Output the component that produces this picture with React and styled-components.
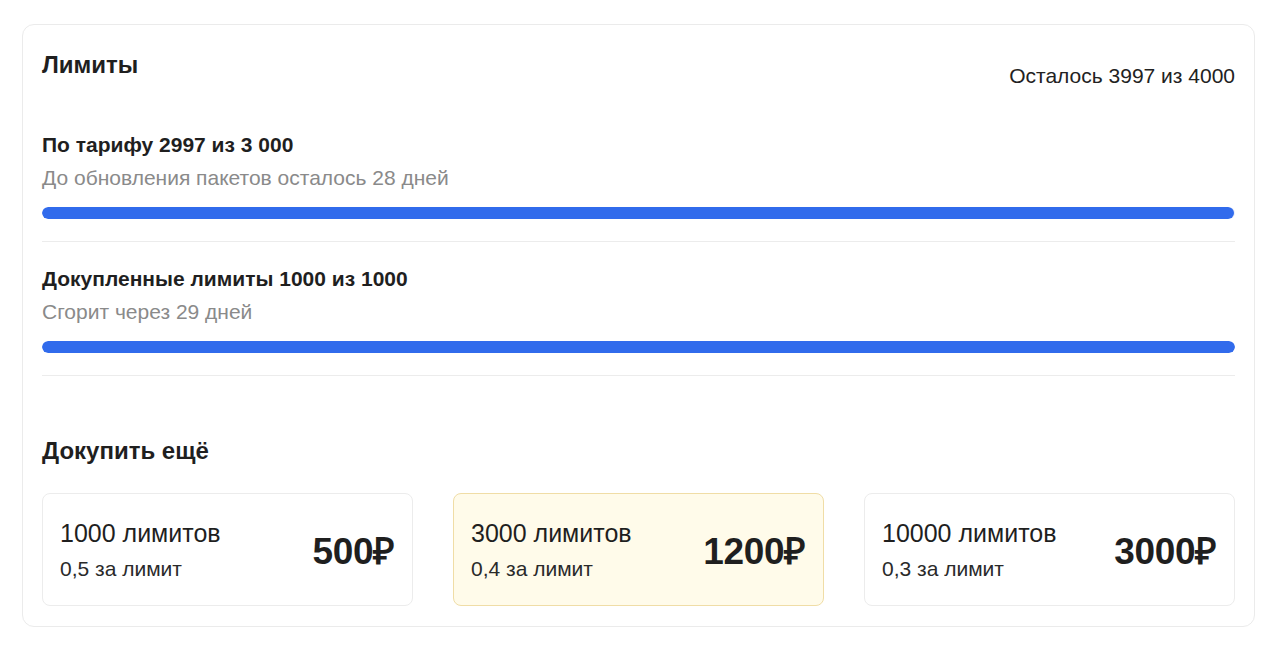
import React from "react";
import styled, { createGlobalStyle } from "styled-components";

const GlobalStyle = createGlobalStyle`
  body {
    margin: 0;
    background: #fff;
    font-family: "Liberation Sans", Arial, sans-serif;
    color: #1f1f1f;
  }
`;

const Page = styled.div`
  padding: 24px 25px 36px 22px;
`;

const Card = styled.section`
  border: 1px solid #ebebeb;
  border-radius: 12px;
  padding: 26px 19px 20px;
`;

const Header = styled.div`
  display: flex;
  justify-content: space-between;
  align-items: flex-start;
  margin-bottom: 18px;
`;

const Title = styled.h2`
  margin: 0;
  font-size: 24px;
  line-height: 28px;
  font-weight: 700;
`;

const Remaining = styled.div`
  margin-top: 12px;
  font-size: 21px;
  line-height: 26px;
  color: #222;
`;

const Limit = styled.div`
  padding: 25px 0 22px;
  border-bottom: 1px solid #ececec;

  & + & {
    padding-top: 24px;
  }
`;

const LimitTitle = styled.div`
  font-size: 21px;
  line-height: 26px;
  font-weight: 700;
`;

const LimitNote = styled.div`
  margin-top: 7px;
  font-size: 21px;
  line-height: 26px;
  color: #8a8a8a;
`;

const Track = styled.div`
  margin-top: 16px;
  height: 12px;
  border-radius: 6px;
  background: #e8eefc;
  overflow: hidden;
`;

const Fill = styled.div`
  height: 100%;
  border-radius: 6px;
  background: #316bec;
`;

const BuyTitle = styled.h3`
  margin: 60px 0 0;
  font-size: 24px;
  line-height: 30px;
  font-weight: 700;
`;

const Packs = styled.div`
  margin-top: 27px;
  display: grid;
  grid-template-columns: repeat(3, 1fr);
  gap: 40px;
`;

const Pack = styled.div`
  height: 113px;
  box-sizing: border-box;
  display: flex;
  align-items: center;
  justify-content: space-between;
  padding: 0 17px;
  border-radius: 8px;
  border: 1px solid ${(p) => (p.$active ? "#f0dda6" : "#ececec")};
  background: ${(p) => (p.$active ? "#fffbea" : "#fff")};
`;

const PackInfo = styled.div`
  display: flex;
  flex-direction: column;
  gap: 8px;
`;

const PackAmount = styled.div`
  font-size: 25px;
  line-height: 30px;
`;

const PackRate = styled.div`
  font-size: 21px;
  line-height: 26px;
  color: #2a2a2a;
`;

const Price = styled.div`
  font-size: 37px;
  font-weight: 700;
  letter-spacing: -0.3px;
`;

const limits = [
  { title: "По тарифу 2997 из 3 000", note: "До обновления пакетов осталось 28 дней", used: 2997, total: 3000 },
  { title: "Докупленные лимиты 1000 из 1000", note: "Сгорит через 29 дней", used: 1000, total: 1000 },
];

const packs = [
  { amount: "1000 лимитов", rate: "0,5 за лимит", price: "500₽" },
  { amount: "3000 лимитов", rate: "0,4 за лимит", price: "1200₽", active: true },
  { amount: "10000 лимитов", rate: "0,3 за лимит", price: "3000₽" },
];

export default function App() {
  return (
    <>
      <GlobalStyle />
      <Page>
        <Card>
          <Header>
            <Title>Лимиты</Title>
            <Remaining>Осталось 3997 из 4000</Remaining>
          </Header>
          {limits.map((l) => (
            <Limit key={l.title}>
              <LimitTitle>{l.title}</LimitTitle>
              <LimitNote>{l.note}</LimitNote>
              <Track>
                <Fill style={{ width: `${(l.used / l.total) * 100}%` }} />
              </Track>
            </Limit>
          ))}
          <BuyTitle>Докупить ещё</BuyTitle>
          <Packs>
            {packs.map((p) => (
              <Pack key={p.amount} $active={p.active}>
                <PackInfo>
                  <PackAmount>{p.amount}</PackAmount>
                  <PackRate>{p.rate}</PackRate>
                </PackInfo>
                <Price>{p.price}</Price>
              </Pack>
            ))}
          </Packs>
        </Card>
      </Page>
    </>
  );
}
